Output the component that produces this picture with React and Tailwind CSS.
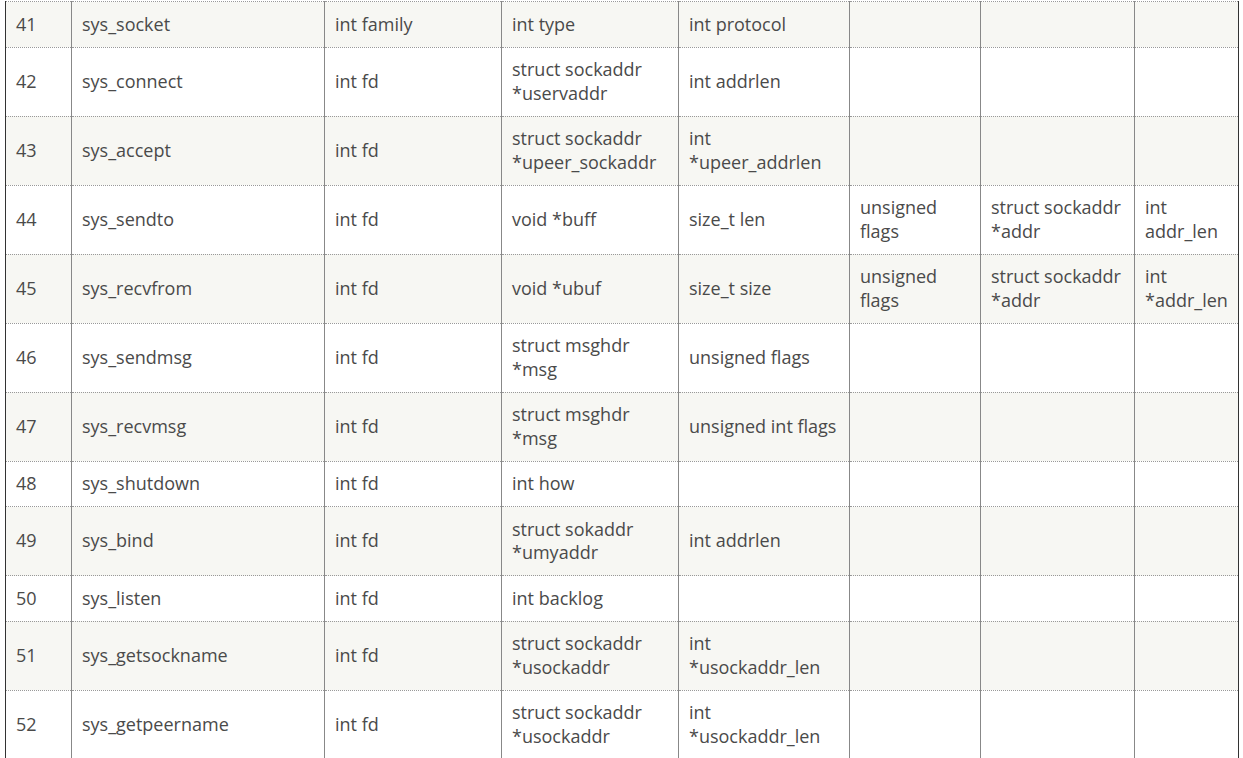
const ROWS = [
  ['41', 'sys_socket', 'int family', 'int type', 'int protocol', '', '', ''],
  ['42', 'sys_connect', 'int fd', 'struct sockaddr\n*uservaddr', 'int addrlen', '', '', ''],
  ['43', 'sys_accept', 'int fd', 'struct sockaddr\n*upeer_sockaddr', 'int\n*upeer_addrlen', '', '', ''],
  ['44', 'sys_sendto', 'int fd', 'void *buff', 'size_t len', 'unsigned\nflags', 'struct sockaddr\n*addr', 'int\naddr_len'],
  ['45', 'sys_recvfrom', 'int fd', 'void *ubuf', 'size_t size', 'unsigned\nflags', 'struct sockaddr\n*addr', 'int\n*addr_len'],
  ['46', 'sys_sendmsg', 'int fd', 'struct msghdr\n*msg', 'unsigned flags', '', '', ''],
  ['47', 'sys_recvmsg', 'int fd', 'struct msghdr\n*msg', 'unsigned int flags', '', '', ''],
  ['48', 'sys_shutdown', 'int fd', 'int how', '', '', '', ''],
  ['49', 'sys_bind', 'int fd', 'struct sokaddr\n*umyaddr', 'int addrlen', '', '', ''],
  ['50', 'sys_listen', 'int fd', 'int backlog', '', '', '', ''],
  ['51', 'sys_getsockname', 'int fd', 'struct sockaddr\n*usockaddr', 'int\n*usockaddr_len', '', '', ''],
  ['52', 'sys_getpeername', 'int fd', 'struct sockaddr\n*usockaddr', 'int\n*usockaddr_len', '', '', ''],
]

const WIDTHS = [66, 253, 177, 177, 171, 131, 154, 104]

export default function App() {
  return (
    <div
      className="h-[758px] overflow-hidden bg-white pl-[5px] pt-[1px] text-[18px] leading-[23.5px] text-[#4a4a4a]"
      style={{ fontFamily: '"Open Sans", "Liberation Sans", sans-serif' }}
    >
      <table className="w-[1234px] table-fixed border-collapse border-x border-x-[#333]">
        <colgroup>
          {WIDTHS.map((w, i) => <col key={i} style={{ width: w }} />)}
        </colgroup>
        <tbody>
          {ROWS.map((row, r) => (
            <tr
              key={row[0]}
              className={`${r % 2 === 0 ? 'bg-[#f7f7f3]' : 'bg-white'} border-y border-dotted border-y-[#999]`}
            >
              {row.map((cell, c) => (
                <td
                  key={c}
                  className={`whitespace-pre-line px-[10px] py-[10.5px] align-middle ${c > 0 ? 'border-l border-l-[#888]' : ''}`}
                >
                  {cell}
                </td>
              ))}
            </tr>
          ))}
        </tbody>
      </table>
    </div>
  )
}
